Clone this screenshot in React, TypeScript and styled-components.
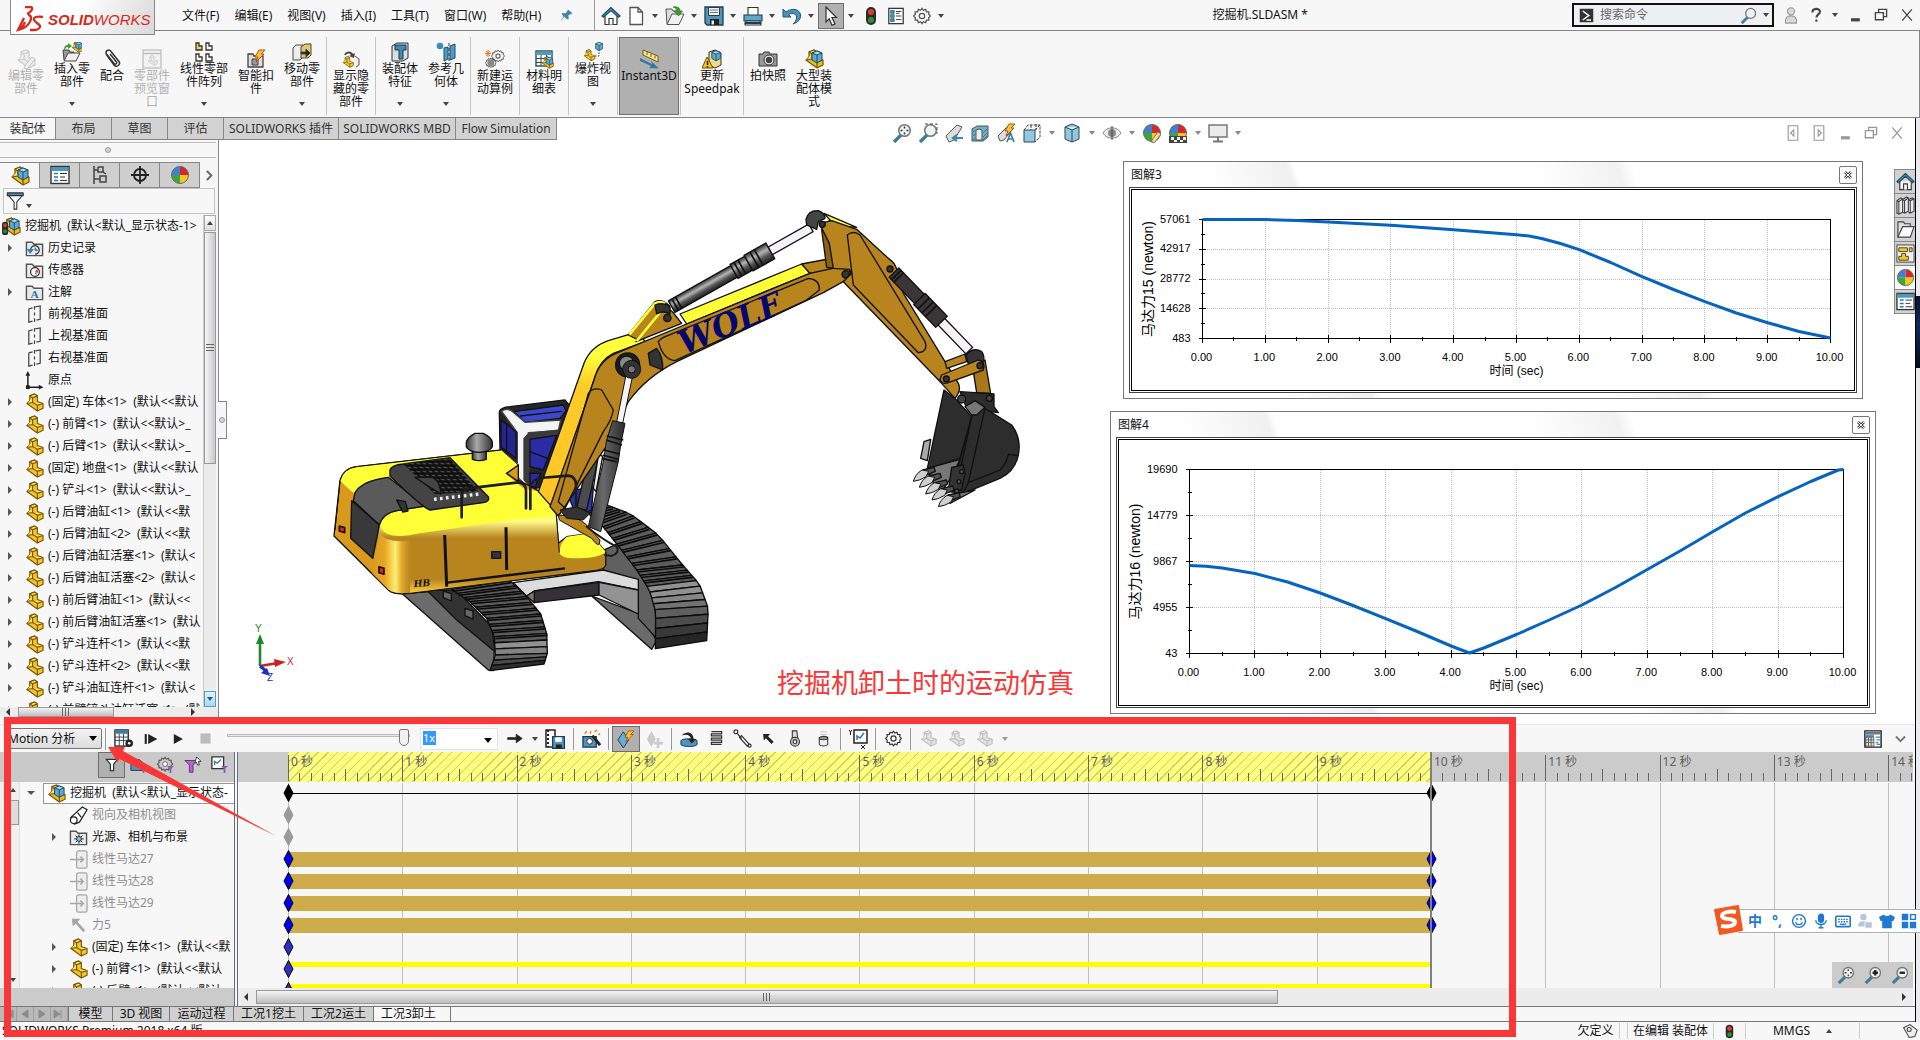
import React from "react";
import styled, { createGlobalStyle } from "styled-components";

const sans = `"Noto Sans", "Noto Sans CJK SC", sans-serif`;
const arial = `"Liberation Sans", "Noto Sans CJK SC", sans-serif`;

const Global = createGlobalStyle`
  *, *::before, *::after { box-sizing: border-box; }
  html, body { margin: 0; padding: 0; }
  body { background: #f7f7f7; color: #111; font: 12px/16px ${sans}; }
  button, input, select { font: inherit; color: inherit; margin: 0; padding: 0; border: 0; background: none; border-radius: 0; }
  svg { display: block; flex: none; }
  ul { list-style: none; margin: 0; padding: 0; }
`;

/* ------------------------------------------------------------------ */
/* Icons, all on a 20 x 20 grid                                        */
/* ------------------------------------------------------------------ */

const block = (fill: string, line: string, light: string) => (
  <g stroke={line} strokeWidth="1.2" strokeLinejoin="round">
    <path d="M5 3l5-2 3 2v6l6 2v5l-6 3L2 11l3-3z" fill={fill} />
    <path d="M5 3l5-2 3 2-5 2zM8 5v5l-6 1M8 10l5 3 6-2M13 13v6" fill={light} />
  </g>
);

const cube = (
  <g stroke="#1d4d66" strokeWidth="1" strokeLinejoin="round">
    <path d="M8 4l5-2 5 2v7l-5 3-5-3z" fill="#5fa9cc" />
    <path d="M8 4l5 2 5-2-5-2z" fill="#a9dcf2" />
    <path d="M13 6v8" />
  </g>
);

const magnifier = (
  <g>
    <path d="M9 12l-7 7" stroke="#3f7c9c" strokeWidth="3.4" />
    <circle cx="12.5" cy="7.5" r="5.8" fill="#eef3f5" stroke="#777" strokeWidth="1.5" />
  </g>
);

const folder = <path d="M1.500 17.500v-14h6l2 2h9v12z" fill="#e9eaec" stroke="#555" strokeWidth="1.5" />;

const ball = (
  <g>
    <circle cx="10" cy="10" r="8.500" fill="#eee" />
    <path d="M10 10V1.500A8.500 8.500 0 0 1 18.500 10z" fill="#d9262b" />
    <path d="M10 10V1.500A8.500 8.500 0 0 0 1.500 10z" fill="#3f7fd6" />
    <path d="M10 10H1.500A8.500 8.500 0 0 0 10 18.500z" fill="#3fa63a" />
    <path d="M10 10h8.500A8.500 8.500 0 0 1 10 18.500z" fill="#f2c81d" />
    <circle cx="10" cy="10" r="8.500" fill="none" stroke="#666" />
  </g>
);

const clapper = (c: string) => (
  <path d="M10 1.500l1.600 2.200 2.500-1 .8 2.600 2.700.1-.2 2.700 2 1.900-2 1.900.2 2.700-2.700.1-.8 2.600-2.500-1L10 18.500l-1.600-2.200-2.500 1-.8-2.600-2.700-.1.200-2.700-2-1.900 2-1.900-.2-2.700 2.700-.1.800-2.600 2.500 1z" fill="none" stroke={c} strokeWidth="1.4" />
);

const table = (
  <g>
    <rect x="2" y="2" width="16" height="15" fill="#fff" stroke="#2c4a5a" strokeWidth="1.4" />
    <path d="M2 3h16v3H2z" fill="#4d9cc4" />
    <path d="M2 9.500h16M2 13.500h16M7 6v11M12.500 6v11" stroke="#2c4a5a" />
  </g>
);

const bolt = <path d="M13 1h6l-4 4h3l-8 8 2-5H9z" fill="#f9c72d" stroke="#b5521a" />;

const motorPlate = (
  <g fill="#ededed" stroke="#a8a8a8" strokeWidth="1.3">
    <rect x="8" y="1" width="11" height="18" rx="2" />
    <path d="M1 10h14M12 7l3 3-3 3" fill="none" strokeWidth="1.600" />
  </g>
);

const glyphs: Record<string, React.ReactNode> = {
  part: block("#f5c81f", "#77540a", "#ffe36b"),
  partGray: block("#e2e2e2", "#bcbcbc", "#efefef"),
  asm: (<g>{block("#f0bb1c", "#77540a", "#ffdf66")}{cube}</g>),
  asmTop: (
    <g>
      {block("#f0bb1c", "#77540a", "#ffdf66")}{cube}
      <rect x="0" y="5" width="6.500" height="14" rx="3" fill="#2b2b2b" />
      <circle cx="3.200" cy="8.600" r="2.100" fill="#d8372b" /><circle cx="3.200" cy="15" r="2.100" fill="#2c8a32" />
    </g>
  ),
  history: (<g>{folder}<path d="M6 12a4.500 4.500 0 1 1 4.500 4" fill="none" stroke="#333" strokeWidth="1.300" /><path d="M2.500 11h6l-3 4zM10.500 9v3h3" fill="#2f82ad" stroke="#2f82ad" /></g>),
  sensor: (<g>{folder}<circle cx="10.500" cy="11.500" r="4.600" fill="#fff" stroke="#333" strokeWidth="1.300" /><path d="M10.500 11.500l3-4v5z" fill="#d33" /><path d="M10.500 12.500l2 1.500" stroke="#333" /></g>),
  note: (<g>{folder}<text x="10.200" y="16" fontSize="12" fontFamily="Liberation Serif, serif" fontWeight="700" textAnchor="middle" fill="#2677a3">A</text></g>),
  light: (<g>{folder}<circle cx="10.500" cy="11.500" r="2.600" fill="#7dc3e6" stroke="#222" /><path d="M10.500 6.500v2M10.500 14.500v2M5.500 11.500h2M13.500 11.500h2M7 8l1.500 1.500M14 8l-1.500 1.500M7 15l1.500-1.500M14 15l-1.500-1.500" stroke="#222" /></g>),
  plane: <path d="M4 4l4-1M11 2l5-1v14l-4 1M8 17l-4 1V4M10 1v4M10 8v3M10 14v4" fill="none" stroke="#444" strokeWidth="1.300" />,
  origin: (<g fill="#222"><path d="M3 4v13h12" fill="none" stroke="#222" strokeWidth="1.600" /><path d="M3 0l2.500 5h-5zM19.500 17l-5 2.500v-5z" /><rect x="1" y="15" width="4" height="4" /></g>),
  home: (<g stroke="#333" strokeWidth="1.200"><path d="M4 10v8.500h12V10" fill="#fff" /><path d="M8 18.500v-6h4v6" fill="#fff" /><path d="M10 1.500L1 10l1.500 1.200L10 4.500l7.500 6.700L19 10z" fill="#4b97bd" stroke="#1d4d66" /></g>),
  doc: <path d="M4 1.500h8l4.500 4.500v12.500H4zM12 1.500V6h4.500" fill="#fff" stroke="#555" strokeWidth="1.300" />,
  open: (<g><path d="M1 3h6l1 2h4v13H2z" fill="#ddd" stroke="#555" /><path d="M2 18.500L7 8h12l-5 10.500z" fill="#f1f1f1" stroke="#555" /><path d="M8 1c5-1 7 1 7 4h2.500L13.500 10 9 5h3c0-2-1-3-4-4z" fill="#3f9a2d" stroke="#24701a" strokeWidth=".6" /></g>),
  save: (<g><path d="M1 1h18v18H3l-2-2z" fill="#5394b8" stroke="#1b3f54" strokeWidth="1.300" /><path d="M4.500 1.500h11v8h-11z" fill="#f4f4f4" stroke="#1b3f54" /><path d="M6 4h8M6 6.500h8" stroke="#777" /><path d="M6 13h9v6H6z" fill="#222" /><path d="M7.500 14.500h2.500v4H7.500z" fill="#eee" /></g>),
  print: (<g stroke="#333" strokeWidth="1.100"><path d="M5 9V1.500h10V9" fill="#fff" /><path d="M1 9h18v6H1z" fill="#5fa7cb" stroke="#1b3f54" /><path d="M3 15l-1 4h16l-1-4z" fill="#eee" /><path d="M1.500 17h17" stroke="#1b3f54" strokeWidth="2" /></g>),
  undo: <path d="M1 3v8h8L6.500 8.500c4-2.500 9-.5 8 4-.4 2-1.500 4-3.500 5.500 5-1.500 8-5 7.500-9C18 3 10 1.500 4 6z" fill="#4d8fb6" stroke="#1f567a" />,
  cursor: <path d="M5 1l10.500 10.500H11l3 6.500-3 1.300-2.800-6.500L5 16z" fill="#f4f4f4" stroke="#333" strokeWidth="1.200" />,
  traffic: (<g><rect x="5" y="1" width="10" height="18" rx="5" fill="#2b2b2b" /><circle cx="10" cy="6" r="3" fill="#e33b2e" /><circle cx="10" cy="14" r="3" fill="#2d9138" /></g>),
  list: (<g><rect x="2" y="1.500" width="16" height="17" fill="#fff" stroke="#333" strokeWidth="1.400" /><path d="M4 4h4v3H4zM4 8.500h4v3H4zM4 13h4v3H4z" fill="#4b97bd" stroke="#1d4d66" strokeWidth=".8" /><path d="M10 5h6M10 7h4M10 10h6M10 14h6" stroke="#333" /></g>),
  listWin: (<g><rect x="1" y="1.500" width="18" height="17" fill="#fff" stroke="#333" strokeWidth="1.400" /><path d="M1.500 2h17v4h-17z" fill="#4b97bd" /><path d="M4 8.500h4M4 12h4M4 15.500h4" stroke="#2d7aa3" strokeWidth="1.600" /><path d="M10 8.500h7M10 12h5M10 15.500h7" stroke="#333" /></g>),
  gear: (<g>{clapper("#555")}<circle cx="10" cy="10" r="3" fill="none" stroke="#555" strokeWidth="1.400" /></g>),
  gearBold: (<g>{clapper("#333")}<circle cx="10" cy="10" r="3" fill="#fff" stroke="#333" strokeWidth="1.400" /></g>),
  pin: <path d="M12 2l6 5-2 1-3.500 1.500.5 5-2.500.5-3.500-3.500L1.500 18 6 11 3.500 8l1-1.500 4.500.5L11 4z" fill="#3f86ad" />,
  edit: (<g opacity=".45">{block("#ddd", "#999", "#eee")}<path d="M9 17l7-9 3 2-7 9-4 1z" fill="#eee" stroke="#888" /></g>),
  insert: (<g><path d="M1 8h6l1 2h4v8H2z" fill="#999" stroke="#444" /><path d="M2 19l4-8h12l-4 8z" fill="#eee" stroke="#444" /><path d="M2 8C2 4 4 3 6 3V1l4 3-4 3V5C4 5 3 6 3 8z" fill="#3f9a2d" /><g transform="translate(9 -1) scale(.6)">{block("#f0bb1c", "#77540a", "#ffdf66")}{cube}</g></g>),
  clip: <path d="M4 5l8 11c2.500 3 7-.5 5-3.500L9 2.500C7-.5 2.500 2 4.500 5l7.500 9.500c1 1.500 3.500 0 2.500-1.500L8 5" fill="none" stroke="#333" strokeWidth="1.500" />,
  preview: (<g opacity=".5"><rect x="1" y="1" width="18" height="18" fill="#eee" stroke="#888" strokeWidth="1.300" /><path d="M1 4.500h18" stroke="#888" strokeWidth="1.500" /><g transform="translate(5 6) scale(.55)">{block("#ddd", "#999", "#eee")}</g></g>),
  pattern: (<g strokeWidth="1.300" stroke="#333"><path d="M2 1h3v3h3v4H2z" fill="#f5d54a" /><path d="M12 1h3v3h3v4h-6zM2 12h3v3h3v4H2zM12 12h3v3h3v4h-6z" fill="#fff" /></g>),
  fastener: (<g><path d="M2 18V5h5l1 2h9v11z" fill="#ddd" stroke="#444" strokeWidth="1.300" /><path d="M6 10h6v6H6z" fill="#999" stroke="#444" />{bolt}</g>),
  move: (<g stroke="#444"><path d="M1 6l3-3h7v12l-3 3H1z" fill="#eee" /><path d="M9 5l4-3h6v11l-3 3h-7z" fill="#e3c870" /><path d="M9 10h5V7l4 4-4 4v-3H9z" fill="#222" /></g>),
  hide: (<g><path d="M3 6c2-5 8-4 9-1l2-1-1 5-5-2 2-1c-1-2-4-2-5 0z" fill="#444" /><g transform="translate(1 7) scale(.6)">{block("#f5c81f", "#77540a", "#ffe36b")}</g><path d="M14 7l4 3v6l-3 2" fill="#eee" stroke="#555" /></g>),
  feature: (<g stroke="#234"><path d="M2 4l5-3h11v15l-5 3H2z" fill="#ddd" /><path d="M5 3h11v5h-3v9H9V8H5z" fill="#3f8db5" /></g>),
  refgeo: (<g><circle cx="4" cy="4" r="3.300" fill="#3f8db5" /><path d="M8 6l4-1v12l-4 2zM14 4l5-2v14l-5 2z" fill="#4b9cc6" stroke="#1d4d66" /><path d="M13 1v18" stroke="#333" strokeDasharray="3 2" /></g>),
  study: (<g><g transform="translate(6 0) scale(.7)">{clapper("#555")}<circle cx="10" cy="10" r="3" fill="none" stroke="#555" strokeWidth="1.500" /></g><g transform="translate(0 8) scale(.58)">{clapper("#444")}<circle cx="10" cy="10" r="6" fill="#888" /></g><path d="M3 1v7M0 4.500h6M1 2l4 5M5 2L1 7" stroke="#e07b2a" /></g>),
  bom: (<g>{table}<g transform="translate(7 7) scale(.65)">{block("#f0bb1c", "#77540a", "#ffdf66")}{cube}</g></g>),
  explode: (<g><g transform="translate(0 7) scale(.62)">{block("#f5c81f", "#77540a", "#ffe36b")}</g><g transform="translate(7 -1) scale(.7)">{cube}</g><path d="M12 14h4V9" fill="none" stroke="#333" strokeDasharray="1.500 1.500" /></g>),
  instant: (<g><path d="M4 1l15 6v6L4 6z" fill="#fbe68c" stroke="#6b5a16" /><path d="M8 3v3M12 5v3M16 6.500v3" stroke="#6b5a16" /><path d="M1 9l12 6-1-3 8 7.500-10-.5 2-2L1 12z" fill="#33799f" /></g>),
  speedpak: (<g><path d="M7 3l6-2 6 3v12l-6 3-6-3z" fill="#eddc8e" stroke="#333" /><g transform="translate(3 0) scale(.85)">{cube}</g><path d="M5 8l6 11H0z" fill="#f7c51c" stroke="#6b4a00" /><path d="M5.500 12v4M5.500 17v1.500" stroke="#222" strokeWidth="1.500" /></g>),
  camera: (<g stroke="#333"><path d="M1 5h4l1-2h5l1 2h7v12H1z" fill="#999" /><circle cx="11" cy="11" r="5" fill="#eee" /><circle cx="11" cy="11" r="2.800" fill="#444" /></g>),
  zoomFit: (<g>{magnifier}<path d="M12.500 3.500v2M12.500 9.500v2M8.500 7.500h2M14.500 7.500h2" stroke="#333" strokeWidth="1.500" /></g>),
  zoomArea: (<g>{magnifier}<path d="M7 1h12v10" fill="none" stroke="#444" strokeDasharray="3 2" /></g>),
  zoomIn: (<g>{magnifier}<path d="M12.500 4.500v6M9.500 7.500h6" stroke="#222" strokeWidth="2.600" /></g>),
  zoomOut: (<g>{magnifier}<path d="M9.500 7.500h6" stroke="#222" strokeWidth="2.600" /></g>),
  search: magnifier,
  scope: (<g><path d="M2 13L13 2l5 2-8 13-5 2z" fill="#ddd" stroke="#555" /><path d="M10 15h9M13 12l-4 3 4 3" stroke="#3d87b0" strokeWidth="2.200" fill="none" /></g>),
  section: (<g stroke="#455"><path d="M2 6l5-3h11v11l-5 4H2z" fill="#6fb0d0" /><path d="M6 7q3-2 6 0v10H6z" fill="#eee" /><path d="M3 9l2-2M3 13l2-2M3 17l2-2M13 10l4-4M13 14l4-4M13 17l4-4" strokeWidth=".7" /></g>),
  dynamic: (<g><path d="M2 13L11 4l5 3-8 10-4 1z" fill="#ddd" stroke="#555" />{bolt}<path d="M11 19l3.500-9 3.500 9M12.500 16h4" fill="none" stroke="#2f7ba5" strokeWidth="1.600" /></g>),
  orient: (<g stroke="#345"><path d="M2 7h11v12H2z" fill="#8fc8e2" /><path d="M2 7l4-5h12v12l-5 5M13 7l5-5M9 2v5M14 1v6" fill="none" strokeDasharray="3 1" /></g>),
  display: (<g stroke="#345"><path d="M3 4l7-3 7 3v12l-7 3-7-3z" fill="#8fc8e2" /><path d="M3 4l7 3 7-3M10 7v12" fill="#d6eef8" /></g>),
  eye: (<g><path d="M1 10c4-7 14-7 18 0-4 7-14 7-18 0z" fill="#eee" stroke="#888" /><circle cx="10" cy="10" r="4" fill="#888" /><path d="M10 3v14" stroke="#444" /></g>),
  ball,
  ballPen: (<g>{ball}<path d="M10 17l6-8 3 2-6 8-3 1z" fill="#f5e08a" stroke="#777" /></g>),
  scene: (<g>{ball}<path d="M1 13h18v7H1z" fill="#444" /><path d="M3 14h3v3H3zM9 14h3v3H9zM15 14h3v3h-3zM6 17h3v2H6zM12 17h3v2h-3z" fill="#eee" /></g>),
  monitor: (<g stroke="#777"><rect x="1" y="2" width="18" height="12" fill="#ececec" strokeWidth="1.500" /><path d="M10 14v4M5 18.500h10" strokeWidth="2" /></g>),
  config: <path d="M4 1v18M4 5h4M4 14h6M8 2h5v5l3 2M8 2v5h5M10 11h6v6h-6z" fill="none" stroke="#444" strokeWidth="1.500" />,
  target: (<g fill="none" stroke="#222" strokeWidth="1.800"><circle cx="10" cy="10" r="6" /><path d="M10 1v18M1 10h18" /></g>),
  funnelBlue: (<g stroke="#333" strokeWidth="1.200"><path d="M2 3l7 8v8h3v-8l7-8z" fill="#fff" /><path d="M1.500 1h17.500v3H1.500z" fill="#3f8db5" /></g>),
  funnel: <path d="M3 3h14l-5 6v8h-4V9z" fill="#fff" stroke="#333" strokeWidth="1.500" />,
  funnelAnim: (<g><path d="M1 4h9l4 3v9H1z" fill="#4d95bb" stroke="#234" /><path d="M11 11h8l-3 3v5h-2v-5z" fill="#9b55b5" /></g>),
  funnelGear: (<g><g transform="scale(.9)">{clapper("#555")}<circle cx="10" cy="10" r="3" fill="#fff" stroke="#555" /></g><path d="M11 11h8l-3 3v5h-2v-5z" fill="#9b55b5" /></g>),
  funnelPurple: (<g><path d="M1 5h13l-4 5v8H6v-8z" fill="#b565cf" stroke="#5d2a70" /><path d="M14 1l5 5h-3l1 4h-2l-1-3-2 1z" fill="#fff" stroke="#333" /></g>),
  funnelPlot: (<g><path d="M1 1v13h13V1z" fill="#fff" stroke="#333" strokeWidth="1.500" /><path d="M4 10V6l3 2 4-4" fill="none" stroke="#2f7ba5" strokeWidth="1.500" /><path d="M11 11h8l-3 3v5h-2v-5z" fill="#9b55b5" /></g>),
  camView: (<g fill="#fff" stroke="#222" strokeWidth="1.300"><path d="M2 12L14 1l5 3-8 13-5 2-4-3z" /><circle cx="5" cy="15" r="3.500" /><path d="M9 7l4 5" /></g>),
  motorGray: motorPlate,
  forceGray: <path d="M3 3h9l-3 3 8 9-2 2-8-9-3 3z" fill="#a5a5a5" />,
  calc: (<g><rect x="1" y="1" width="14" height="17" fill="#fff" stroke="#222" strokeWidth="1.400" /><path d="M1 1h14v4H1z" fill="#3f7c9c" /><path d="M1 8.500h14M1 12h14M5.500 5v13M10 5v13" stroke="#345" /><circle cx="16" cy="15" r="4" fill="#222" /><circle cx="16" cy="15" r="1.400" fill="#fff" /></g>),
  stepPlay: (<g fill="#222"><path d="M1 3h3v14H1z" /><path d="M6 3l13 7-13 7z" /></g>),
  play: <path d="M4 3l13 7-13 7z" fill="#222" />,
  stop: <path d="M4 4h12v12H4z" fill="#bcbcbc" />,
  right: <path d="M2 9h10V5l7 5-7 5v-4H2z" fill="#222" stroke="#222" />,
  film: (<g><path d="M1 1h9v17H1z" fill="#fff" stroke="#222" strokeWidth="1.500" /><path d="M3 1v17" stroke="#222" strokeWidth="2" strokeDasharray="2 2" /><g transform="translate(7 7) scale(.65)"><path d="M1 1h18v18H1z" fill="#5394b8" stroke="#1b3f54" strokeWidth="2" /><path d="M5 2h10v7H5z" fill="#fff" /><path d="M6 13h9v6H6z" fill="#222" /></g></g>),
  wizard: (<g><path d="M1 8h14v11H1z" fill="#4d95bb" stroke="#12384c" strokeWidth="1.300" /><circle cx="8" cy="13" r="3" fill="#fff" stroke="#222" /><path d="M11 7l8 10" stroke="#222" strokeWidth="3" /><path d="M3 5l2-3M9 2v3M13 3l3-2M17 6l2-1" stroke="#e38b2a" strokeWidth="1.600" /></g>),
  keyed: (<g><path d="M7 2l6 9-6 9-6-9z" fill="#64aeda" stroke="#234" />{bolt}</g>),
  addKey: (<g fill="#ccc"><path d="M7 1l5 9-5 9-5-9z" /><path d="M13 9h3v4h4v3h-4v4h-3v-4h-3v-3h3z" /></g>),
  motor: (<g><path d="M1 12c0-3 18-3 18 0v4c0 3-18 3-18 0z" fill="#4d95bb" stroke="#12384c" /><path d="M2 6c6-6 13-3 13 4h3l-5 5-4-5h3c0-4-4-6-10-4z" fill="#222" /></g>),
  spring: <path d="M4 2h12v2.500H4V7h12v2.500H4V12h12v2.500H4V17h12" fill="none" stroke="#333" strokeWidth="1.500" />,
  damper: (<g stroke="#333" strokeWidth="1.300"><path d="M3 3l6 7M7 9l8 9 2-2-8-9z" fill="#eee" /><circle cx="3" cy="3" r="2" fill="#fff" /><circle cx="17.500" cy="17.500" r="1.500" fill="#fff" /></g>),
  force: <path d="M3 3h10l-3 3 8 8-3 3-8-8-3 3z" fill="#222" />,
  contact: (<g stroke="#333" strokeWidth="1.200"><path d="M7 1h5l1 8H7z" fill="#ddd" /><circle cx="10" cy="13" r="5" fill="#bbb" /><circle cx="10" cy="13" r="2" fill="#fff" /></g>),
  gravity: (<g stroke="#333" strokeWidth="1.200"><path d="M6 2h8M6 5h8" stroke="#ccc" /><path d="M5 9h10v8c-2 2.500-8 2.500-10 0z" fill="#eee" /><ellipse cx="10" cy="9.500" rx="5" ry="2" fill="#999" /></g>),
  plot: (<g><path d="M6 1h13v13H6z" fill="#fff" stroke="#222" strokeWidth="1.500" /><path d="M9 11V7l3 2 4-5" fill="none" stroke="#2f7ba5" strokeWidth="1.500" /><path d="M1 1l1.500 2L4 1M2.500 3v3M13 16l4 4M17 16l-4 4" stroke="#222" fill="none" /></g>),
  tableWin: (<g><path d="M1 1h18v18H1z" fill="#fff" stroke="#222" strokeWidth="1.600" /><path d="M1 2h18v3H1z" fill="#777" /><path d="M2 5h9v3H2z" fill="#3f9fc9" /><path d="M2 8h9v10H2z" fill="#ddd" stroke="#444" strokeWidth=".8" /><path d="M2 11h9M2 14h9M5 8v10M8 8v10" stroke="#444" strokeWidth=".8" /><path d="M13 8h5M14 11h4M13 14h3M14 16h4" stroke="#3f8db5" strokeWidth="1.400" /></g>),
  chevDown: <path d="M3 7l7 7 7-7" fill="none" stroke="#777" strokeWidth="3" />,
  chevRight: <path d="M6 3l7 7-7 7" fill="none" stroke="#666" strokeWidth="3" />,
  user: (<g fill="#d8d8d8" stroke="#999" strokeWidth="1.200"><circle cx="10" cy="6" r="4" /><path d="M4 19c-1-6 2-8 6-8s7 2 6 8z" /></g>),
  help: <path d="M5.500 7c0-6 9.500-6 9.500-1 0 3-4.500 3.500-4.500 7M10.500 15.500v3" fill="none" stroke="#444" strokeWidth="2.600" />,
  min: <path d="M5 14h11v4H5z" fill="#444" />,
  restore: <path d="M7 7V3h10v9h-4M3 7h10v9H3z" fill="none" stroke="#444" strokeWidth="1.700" />,
  close: <path d="M4 3l12 14M16 3L4 17" stroke="#444" strokeWidth="1.600" />,
  paneLeft: <path d="M4 1h12v18H4zM11 6v8l-4-4z" fill="none" stroke="#444" strokeWidth="1.400" />,
  paneRight: <path d="M4 1h12v18H4zM9 6v8l4-4z" fill="none" stroke="#444" strokeWidth="1.400" />,
  prompt: (<g><rect x="1" y="1" width="18" height="18" fill="#333" /><path d="M5 4l8 6-8 6M10 16h6" fill="none" stroke="#fff" strokeWidth="2" /></g>),
  books: <path d="M1 5l4-3 2 1v14l-4 2-2-1zM7 4l4-3 2 1v14l-4 2-2-1M13 4l4-2 2 1v13l-4 2-2-1M1 5l2 1 4-3M3 6v13M7 4l2 1 4-3M9 5v13M13 4l2 1 4-2M15 5v13" fill="#eee" stroke="#444" strokeWidth="1.200" />,
  folderOpen: (<g stroke="#444" strokeWidth="1.200"><path d="M2 18V2h6l1 2h6v4" fill="#ddd" /><path d="M2 18L7 7h12l-4 11z" fill="#fff" /></g>),
  palette: (<g stroke="#443"><rect x="1" y="1" width="18" height="18" fill="#eee" /><path d="M3 4h9v4H3zM14 4h3v4h-3zM6 10h4v3h3v4H3v-4h3z" fill="#f5c81f" /></g>),
  tag: (<g fill="#eee" stroke="#444" strokeWidth="1.300"><path d="M2 6l8-4 9 7-3 8-7 1z" /><circle cx="9" cy="8" r="2.500" /></g>),
  smile: (<g fill="none" stroke="#1f78d1" strokeWidth="1.800"><circle cx="10" cy="10" r="8" /><path d="M5.500 11.500c2 4 7 4 9 0M7.500 6v3M12.500 6v3" /></g>),
  mic: (<g stroke="#1f78d1" strokeWidth="1.800"><rect x="7" y="1.500" width="6" height="10" rx="3" fill="#1f78d1" /><path d="M3.500 9c0 7 13 7 13 0M10 14.500v4M7 18.500h6" fill="none" /></g>),
  keyboard: (<g><rect x="1" y="4" width="18" height="13" rx="1" fill="#fff" stroke="#1f78d1" strokeWidth="2" /><path d="M4 8h12M4 11h12" stroke="#1f78d1" strokeWidth="1.700" strokeDasharray="2 1.300" /><path d="M6 14h8" stroke="#1f78d1" strokeWidth="1.700" /></g>),
  person: (<g fill="#b7c5dc"><circle cx="8" cy="5" r="4" /><path d="M1 17c0-9 14-9 14 0z" /><path d="M10 11h9v8h-9z" stroke="#fff" /></g>),
  shirt: <path d="M6 2c2 2.500 6 2.500 8 0l6 3-2 5h-2v9H4v-9H2L0 5z" fill="#1f78d1" />,
  apps: (<g fill="#1f78d1"><path d="M1 1h8v8H1zM1 11h8v8H1zM11 11h8v8h-8z" /><path d="M12 2h6v6h-6z" fill="#fff" stroke="#1f78d1" strokeWidth="1.800" /></g>),
};

const Icon = ({ name, size = 18 }: { name: string; size?: number }) => (
  <svg width={size} height={size} viewBox="0 0 20 20" aria-hidden="true">{glyphs[name]}</svg>
);

const Caret = styled.span<{ $color?: string }>`
  display: block;
  width: 0;
  height: 0;
  border: solid transparent;
  border-width: 4px 3px 0;
  border-top-color: ${(p) => p.$color || "#444"};
`;

/* ------------------------------------------------------------------ */
/* Frame                                                               */
/* ------------------------------------------------------------------ */

const Page = styled.div`
  display: flex;
  flex-direction: column;
  height: 100vh;
  overflow: hidden;
`;

const TitleBar = styled.header`
  display: flex;
  align-items: center;
  height: 31px;
  border-bottom: 1px solid #868686;
  flex: none;
`;

const Logo = styled.div`
  display: flex;
  align-items: center;
  align-self: flex-start;
  gap: 4px;
  width: 145px;
  height: 35px;
  margin: 0 24px 0 10px;
  padding: 6px 0 0 5px;
  border: 1px solid #888;
  border-top: 0;
  background: linear-gradient(115deg, #fff 45%, #d9d9d9);
  color: #da291c;
  font: italic 15px/20px ${arial};
  position: relative;
  z-index: 3;
  flex: none;
  b { font-weight: 700; }
`;

const Menu = styled.nav`
  display: flex;
  gap: 15px;
  margin: 1px 0 0 3px;
  button { white-space: nowrap; }
`;

const Slot = styled.button<{ $w?: number; $on?: boolean; $dim?: boolean }>`
  display: flex;
  align-items: center;
  justify-content: center;
  flex: none;
  width: ${(p) => p.$w || 26}px;
  height: 26px;
  ${(p) => p.$on && "background: #b0b0b0; border: 1px solid #6f6f6f;"}
  ${(p) => p.$dim && "opacity: 0.55;"}
`;

const Divider = styled.span<{ $h?: number }>`
  flex: none;
  width: 1px;
  height: ${(p) => p.$h || 22}px;
  margin: 0 3px;
  background: #999;
`;

const QuickBar = styled.div`
  display: flex;
  align-items: center;
  margin: 2px 0 0;
`;

const DocTitle = styled.h1`
  flex: 1;
  margin: 0;
  text-align: center;
  font: 12px/16px ${sans};
`;

const Search = styled.label`
  display: flex;
  align-items: center;
  gap: 6px;
  width: 202px;
  height: 24px;
  margin-right: 4px;
  padding: 0 3px 0 5px;
  border: 2px solid #111;
  background: #eef0f4;
  input { flex: 1; min-width: 0; outline: 0; }
  input::placeholder { color: #666; opacity: 1; }
`;

const Ribbon = styled.div`
  display: flex;
  height: 87px;
  padding: 6px 0 2px 3px;
  border: solid #868686;
  border-width: 0 1px 1px 0;
  flex: none;
`;

const RibbonRule = styled.span`
  width: 1px;
  margin: 0 1px;
  background: #c4c4c4;
  flex: none;
`;

const RibbonButton = styled.button<{ $w: number; $high?: boolean; $dim?: boolean; $on?: boolean }>`
  display: flex;
  flex-direction: column;
  align-items: center;
  flex: none;
  width: ${(p) => p.$w}px;
  padding-top: ${(p) => (p.$high ? 5 : 12)}px;
  color: ${(p) => (p.$dim ? "#b2b2b2" : "#111")};
  line-height: 13px;
  white-space: nowrap;
  ${(p) => p.$on && "background: #b0b0b0; box-shadow: inset 0 0 0 1px #6f6f6f;"}
  ${Caret} { margin-top: auto; margin-bottom: 9px; }
`;

const Body = styled.div`
  display: flex;
  flex: 1;
  min-height: 0;
`;

const Workspace = styled.main`
  display: flex;
  flex-direction: column;
  flex: 1;
  min-width: 0;
  border-right: 1px solid #000;
  background: #fff;
`;

const Sliver = styled.div`
  width: 4px;
  padding-top: 178px;
  background: #e9ebee;
  &::before { content: ""; display: block; height: 72px; background: linear-gradient(#0b1030, #0e2a5a 40%, #060a18); }
`;

const TabStrip = styled.div`
  display: flex;
  height: 22px;
  flex: none;
`;

const CommandTab = styled.button<{ $w: number; $on?: boolean }>`
  width: ${(p) => p.$w}px;
  height: 22px;
  flex: none;
  color: #333;
  white-space: nowrap;
  background: ${(p) => (p.$on ? "#f7f7f7" : "#d2d2d2")};
  border: solid #868686;
  border-width: 0 ${(p) => (p.$on ? 0 : 1)}px 1px 0;
  &:nth-child(2) { border-left-width: 1px; }
`;

const Middle = styled.div`
  display: flex;
  flex: 1;
  min-height: 0;
`;

/* ------------------------------------------------------------------ */
/* Feature tree                                                        */
/* ------------------------------------------------------------------ */

const SidePanel = styled.aside`
  display: flex;
  flex-direction: column;
  width: 219px;
  flex: none;
  padding: 2px 0 7px;
  background: #f7f7f7;
  border-right: 1px solid #888;
`;

const Grip = styled.div`
  display: grid;
  place-items: center;
  height: 16px;
  margin: 0 2px 4px 0;
  border: solid #bbb;
  border-width: 1px 0;
  flex: none;
`;

const Dot = styled.span`
  width: 6px;
  height: 6px;
  border-radius: 50%;
  border: 1px solid #999;
  background: #d4d4d4;
`;

const PanelTabs = styled.div`
  display: flex;
  align-items: center;
  height: 26px;
  flex: none;
`;

const PanelTab = styled.button<{ $on?: boolean }>`
  display: grid;
  place-items: center;
  width: 40px;
  height: 26px;
  background: ${(p) => (p.$on ? "#f7f7f7" : "#cfcfcf")};
  border: solid #888;
  border-width: 1px 1px ${(p) => (p.$on ? 0 : 1)}px 0;
`;

const FilterBox = styled.button`
  display: flex;
  align-items: center;
  gap: 2px;
  height: 26px;
  margin: 0 3px 1px;
  padding: 0 2px;
  border: 1px solid #c4c4c4;
  flex: none;
  ${Caret} { margin-top: 10px; }
`;

const TreeArea = styled.div`
  display: flex;
  flex: 1;
  min-height: 0;
  overflow: hidden;
`;

const TreeList = styled.ul`
  flex: 1;
  min-width: 0;
  overflow: hidden;
`;

const TreeRow = styled.li<{ $pad: number; $dim?: boolean }>`
  display: flex;
  align-items: center;
  gap: 4px;
  height: 22px;
  padding-left: ${(p) => p.$pad}px;
  color: ${(p) => (p.$dim ? "#8e8e8e" : "#111")};
  white-space: pre;
  overflow: hidden;
`;

const Twist = styled.span<{ $open?: boolean; $none?: boolean }>`
  flex: none;
  width: 0;
  height: 0;
  margin-right: 9px;
  border: solid transparent;
  ${(p) => (p.$open ? "border-width: 4px 4px 0; border-top-color: #555;" : "border-width: 4px 0 4px 4px; border-left-color: #555;")}
  ${(p) => p.$none && "visibility: hidden;"}
`;

const VScroll = styled.div`
  display: flex;
  flex-direction: column;
  width: 13px;
  margin-right: 2px;
  background: #ececec;
  border-left: 1px solid #ccc;
  flex: none;
`;

const ScrollBtn = styled.button<{ $blue?: boolean }>`
  display: grid;
  place-items: center;
  height: 16px;
  flex: none;
  border: 1px solid ${(p) => (p.$blue ? "#5c9cc4" : "#aaa")};
  background: ${(p) => (p.$blue ? "linear-gradient(#e4f3fb,#a9d7f1)" : "linear-gradient(#fff,#ddd)")};
  &:first-child ${Caret} { transform: rotate(180deg); }
`;

const VThumb = styled.div`
  display: grid;
  place-items: center;
  height: 232px;
  margin: 1px 0 auto;
  border: 1px solid #999;
  background: linear-gradient(90deg, #f6f6f6, #c9c9cd);
  color: #555;
`;

const GripLines = styled.span<{ $v?: boolean }>`
  width: 8px;
  height: 8px;
  background: repeating-linear-gradient(${(p) => (p.$v ? "90deg" : "180deg")}, #666 0 1px, transparent 1px 3px);
`;

const HScroll = styled.div<{ $h: number }>`
  display: flex;
  align-items: center;
  height: ${(p) => p.$h}px;
  background: #ececec;
  flex: none;
`;

const SideArrow = styled.span<{ $right?: boolean }>`
  flex: none;
  width: 0;
  height: 0;
  border: solid transparent;
  ${(p) => (p.$right ? "border-width: 4px 0 4px 4px; border-left-color: #333; margin: 0 7px 0 auto;" : "border-width: 4px 4px 4px 0; border-right-color: #333; margin: 0 8px 0 6px;")}
`;

const HThumb = styled.div<{ $w: string }>`
  display: grid;
  place-items: center;
  width: ${(p) => p.$w};
  height: 100%;
  max-height: 14px;
  border: 1px solid #999;
  background: linear-gradient(#f4f4f4, #bdbdbd);
`;

const ScrollCorner = styled.span`
  flex: none;
  width: 16px;
`;

/* ------------------------------------------------------------------ */
/* Viewport                                                            */
/* ------------------------------------------------------------------ */

const Viewport = styled.section`
  position: relative;
  flex: 1;
  min-width: 0;
  background: #fff;
`;

const HeadsUp = styled.div`
  position: absolute;
  top: -20px;
  left: 50%;
  transform: translateX(-50%);
  display: flex;
  align-items: center;
`;

const DocControls = styled.div`
  position: absolute;
  top: -20px;
  right: 5px;
  display: flex;
  opacity: 0.55;
`;

const Splitter = styled.div`
  position: absolute;
  left: -1px;
  top: 261px;
  display: grid;
  place-items: center;
  width: 9px;
  height: 38px;
  border: 1px solid #888;
  border-left: 0;
  background: #f7f7f7;
`;

const Model = styled.svg`
  position: absolute;
  left: 91px;
  top: 50px;
`;

const Triad = styled.svg`
  position: absolute;
  left: 31px;
  top: 484px;
`;

const Caption = styled.p`
  position: absolute;
  left: 558px;
  top: 525px;
  margin: 0;
  color: #fa3737;
  font: 27px/36px ${sans};
  white-space: nowrap;
`;

const TaskPane = styled.div`
  position: absolute;
  right: 0;
  top: 29px;
  display: flex;
  flex-direction: column;
  width: 21px;
  border: solid #888;
  border-width: 1px 0 0 1px;
`;

const TaskTab = styled.button<{ $on?: boolean }>`
  display: grid;
  place-items: center;
  height: 24px;
  background: ${(p) => (p.$on ? "#fafafa" : "#d2d2d2")};
  border-bottom: 1px solid #888;
`;

const PlotWindow = styled.figure<{ $top: number; $right: number; $width: number }>`
  position: absolute;
  top: ${(p) => p.$top}px;
  right: ${(p) => p.$right}px;
  width: ${(p) => p.$width}px;
  margin: 0;
  padding: 0 5px 5px;
  border: 1px solid #777;
  background: linear-gradient(70deg, #fff 20%, #f0f0f0 30%, #fff 31%, #fff 60%, #f1f1f1 70%, #fff 72%);
`;

const PlotTitle = styled.figcaption`
  display: flex;
  align-items: center;
  justify-content: space-between;
  height: 25px;
  padding-left: 2px;
`;

const PlotClose = styled.button`
  display: grid;
  place-items: center;
  width: 18px;
  height: 18px;
  border: 1px solid #777;
  border-radius: 2px;
  background: #fff;
`;

const PlotFrame = styled.div`
  padding: 1px;
  border: 1px solid #444;
  background: #fff;
  > svg { border: 1px solid #000; box-sizing: content-box; }
`;

type PlotProps = {
  name: string; series: string; top: number; right: number;
  view: [number, number, number, number];
  box: [number, number, number, number];
  ticks: string[]; pts: [number, number][]; labelX: number;
};

const Plot = ({ name, series, top, right, view, box, ticks, pts, labelX }: PlotProps) => {
  const [l, t, r, b] = box;
  const px = (v: number) => l + ((r - l) * v) / 10;
  const line = pts.map(([v, y], i) => `${i === 0 ? "M" : "L"}${px(v)} ${y}`).join("");
  return (
    <PlotWindow $top={top} $right={right} $width={view[2] + 18}>
      <PlotTitle>{name}<PlotClose aria-label="关闭"><svg width="8" height="8" viewBox="0 0 8 8"><path d="M1 1l6 6M7 1L1 7" stroke="#444" strokeWidth="2.600" /><path d="M1 1l6 6M7 1L1 7" stroke="#fff" /></svg></PlotClose></PlotTitle>
      <PlotFrame>
        <svg width={view[2]} height={view[3]} viewBox={view.join(" ")} fontFamily={arial} fontSize="11" shapeRendering="crispEdges">
          <g stroke="#bdbdbd" strokeDasharray="1 1">
            {[1, 2, 3, 4, 5, 6, 7, 8, 9].map((n) => <path key={n} d={`M${Math.floor(px(n)) + 0.5} ${t}V${b}`} />)}
            {[1, 2, 3].map((n) => <path key={n} d={`M${l} ${Math.floor(t + ((b - t) * n) / 4) + 0.5}H${r}`} />)}
          </g>
          <rect x={l} y={t} width={r - l} height={b - t} fill="none" stroke="#000" />
          <g stroke="#000">
            {Array.from({ length: 21 }, (_, i) => <path key={i} d={`M${Math.floor(px(i / 2)) + 0.5} ${b - (i % 2 ? 2 : 4)}v${i % 2 ? 4 : 8}`} />)}
            {Array.from({ length: 9 }, (_, i) => <path key={i} d={`M${l - (i % 2 ? 2 : 4)} ${Math.floor(t + ((b - t) * i) / 8) + 0.5}h${i % 2 ? 4 : 7}`} />)}
          </g>
          <path d={line} fill="none" stroke="#0563c1" strokeWidth="3" strokeLinejoin="round" shapeRendering="auto" />
          {ticks.map((s, i) => <text key={s} x={l - 12} y={t + ((b - t) * i) / 4 + 3} textAnchor="end">{s}</text>)}
          {Array.from({ length: 11 }, (_, i) => <text key={i} x={px(i) - 1} y={b + 22} textAnchor="middle">{i}.00</text>)}
          <text x={(l + r) / 2} y={b + 36} textAnchor="middle" fontSize="12">时间 (sec)</text>
          <text transform={`translate(${labelX} ${(t + b) / 2}) rotate(-90)`} textAnchor="middle" fontSize="14">{series}</text>
        </svg>
      </PlotFrame>
    </PlotWindow>
  );
};

/* Excavator model */

type P = [number, number];
const along = (line: P[], f: number): P => {
  const s = f * (line.length - 1);
  const i = Math.min(Math.floor(s), line.length - 2);
  const k = s - i;
  return [line[i][0] + (line[i + 1][0] - line[i][0]) * k, line[i][1] + (line[i + 1][1] - line[i][1]) * k];
};

const Tread = ({ inner, outer, n }: { inner: P[]; outer: P[]; n: number }) => (
  <g>
    {Array.from({ length: n }, (_, i) => {
      const a = along(inner, i / n), b = along(inner, (i + 1) / n), c = along(outer, (i + 1) / n), d = along(outer, i / n);
      const f = i / n;
      const shade = f < 0.62 ? 92 : f < 0.72 ? 145 : Math.max(34, 145 - (f - 0.7) * 420);
      return (
        <g key={i}>
          <path d={`M${a}L${b}L${c}L${d}Z`} fill={`rgb(${shade},${shade},${shade})`} stroke="#0c0c0c" strokeWidth="4" />
          {f < 0.62 && <path d={`M${a[0] + 3} ${a[1] + 6}L${d[0] + 3} ${d[1] + 6}`} stroke="#0c0c0c" strokeWidth="5" />}
        </g>
      );
    })}
  </g>
);

const Excavator = () => (
  <Model width="730" height="490" viewBox="0 0 2190 1470" role="img" aria-label="挖掘机">
    <defs>
      <linearGradient id="side" x1="0" y1="0" x2="0" y2="1"><stop offset="0" stopColor="#ffff40" /><stop offset=".12" stopColor="#fff98a" /><stop offset=".32" stopColor="#b8841e" /><stop offset=".82" stopColor="#b8841e" /><stop offset="1" stopColor="#ffd23c" /></linearGradient>
      <linearGradient id="rear" x1="0" y1="0" x2="1" y2="0"><stop offset="0" stopColor="#d99a1c" /><stop offset=".35" stopColor="#e8a824" /><stop offset=".62" stopColor="#ffee70" /><stop offset=".8" stopColor="#e0a428" /><stop offset="1" stopColor="#b8841e" /></linearGradient>
      <linearGradient id="boomTop" x1="0" y1="0" x2="0" y2="1"><stop offset="0" stopColor="#ffff3c" /><stop offset=".14" stopColor="#ffff3c" /><stop offset=".3" stopColor="#ffcc28" /><stop offset="1" stopColor="#ffc426" /></linearGradient>
      <linearGradient id="barrel" x1="0" y1="0" x2="0" y2="1"><stop offset="0" stopColor="#333" /><stop offset=".35" stopColor="#b4b4b4" /><stop offset=".65" stopColor="#555" /><stop offset="1" stopColor="#1d1d1d" /></linearGradient>
      <linearGradient id="dark" x1="0" y1="0" x2="1" y2="0"><stop offset="0" stopColor="#333" /><stop offset=".4" stopColor="#6a6a6a" /><stop offset="1" stopColor="#2a2a2a" /></linearGradient>
      <linearGradient id="shade" x1="0" y1="0" x2="1" y2="0"><stop offset="0" stopColor="#383838" /><stop offset=".4" stopColor="#a8a8a8" /><stop offset="1" stopColor="#333" /></linearGradient>
      <pattern id="mesh" width="18" height="12" patternUnits="userSpaceOnUse" patternTransform="skewX(38)"><rect width="18" height="12" fill="#0d0d0d" /><rect x="2" y="2" width="11" height="5" fill="#4c4c4c" /></pattern>
    </defs>

    <g stroke="#111" strokeWidth="4" strokeLinejoin="round">
      {/* far track and undercarriage */}
      <path d="M845 1218L985 1270L1040 1350L1025 1378Z" fill="#6b6b6b" />
      <path d="M860 1090L925 1060L1000 1150L1035 1240L1040 1345L985 1285L985 1200L880 1140Z" fill="#606060" />
      <Tread n={22} inner={[[820, 955], [875, 1005], [925, 1068], [980, 1140], [1018, 1200], [1037, 1265], [1036, 1376]]} outer={[[885, 943], [962, 972], [1045, 1035], [1118, 1125], [1168, 1182], [1195, 1255], [1190, 1352]]} />
      <path d="M610 1178L880 1140L985 1168L985 1200L865 1175L673 1203L650 1218Z" fill="#dcdcdc" />
      <path d="M673 1203L867 1177V1215L673 1238Z" fill="#343236" />
      <path d="M867 1177L985 1200V1272L867 1215Z" fill="#939393" />
      <path d="M650 1218L673 1203V1238Z" fill="#777" />

      {/* near track */}
      <path d="M275 1210L440 1200L555 1330L550 1442L535 1440Z" fill="#6b6b6b" />
      <path d="M350 1200H440L545 1310L555 1385L440 1290Z" fill="#333" />
      <path d="M400 1203l24 8v22l-24-10zM465 1255l24 8v24l-24-10z" fill="#666" />
      <Tread n={15} inner={[[425, 1198], [480, 1235], [530, 1285], [553, 1340], [556, 1395], [540, 1442]]} outer={[[600, 1172], [650, 1220], [692, 1272], [710, 1330], [712, 1390], [702, 1422]]} />

      {/* cab */}
      <path d="M568 665Q572 652 600 650L765 630L790 660L700 890L655 900L570 778Z" fill="#262626" />
      <path d="M612 665L760 645L768 662L750 685L645 697Z" fill="#3d47cc" />
      <path d="M575 664Q590 652 606 664L645 697L752 690L745 722L655 728V895L622 860V728Z" fill="#f4f4f4" stroke="#444" />
      <path d="M655 728L750 718L745 735L662 745L658 890L640 870L640 745Z" fill="#3a3a3a" stroke="none" />
      <path d="M573 690L618 725V805L573 772Z" fill="#24268f" />
      <path d="M660 748L740 736L700 840L660 830ZM660 850L692 850L676 890H660Z" fill="#2a2ca6" />
      <path d="M660 785L712 805M590 705V785M630 678L755 664" stroke="#111" fill="none" />
      <path d="M770 905L850 890L845 960L800 980Z" fill="#2f31b8" />

      {/* rear boom cylinder */}
      <path d="M838 790L866 800L830 960L800 955Z" fill="#4b4b4b" />
      <path d="M866 790L878 800L858 905L850 895Z" fill="#eee" />

      {/* house */}
      <path d="M72 1038L90 872Q100 835 140 830L575 780L625 825V870L690 905L738 965L745 1060L770 1040L840 1030L887 1085V1125Q885 1140 840 1143L300 1210Q250 1215 235 1200Z" fill="#d99a1c" />
      <path d="M90 872Q100 835 140 830L575 780L628 825L585 850L640 895L690 905L738 965C738 985 700 985 640 990L330 1040C240 1055 215 1030 208 1005Q215 965 260 962L350 950L235 862Q160 870 132 910L120 900Z" fill="#ffff38" stroke="none" />
      <path d="M90 872Q100 835 140 830L575 780L625 825M90 872L75 1020" fill="none" strokeWidth="3" />
      <path d="M208 1000C215 1040 260 1045 330 1030L640 985Q720 985 738 965L748 1090Q755 1105 800 1100L887 1090V1125Q885 1140 840 1143L300 1210Q250 1215 235 1200L190 1150Z" fill="url(#side)" stroke="none" />
      <path d="M208 1030Q230 1060 300 1052V1208Q250 1213 235 1200L185 1150Z" fill="url(#rear)" stroke="none" />
      <path d="M748 1088Q750 1060 770 1040L840 1030L887 1085Q870 1105 790 1105Q755 1105 748 1088Z" fill="#ffff38" stroke="none" />
      <path d="M72 1038L235 1200Q250 1215 300 1210L840 1143Q885 1140 887 1125V1085M738 965L748 1088" fill="none" strokeWidth="3" />
      <path d="M135 908Q155 872 235 862L345 948L262 962Q218 970 208 1005L130 932Z" fill="#5a5a5a" />
      <path d="M125 932L208 1005L188 1105L122 1045Z" fill="#393939" />
      <path d="M88 1008l16 5v15l-16-5zM207 1130l15 5v18l-15-5z" fill="#e3261d" stroke="#111" strokeWidth="5" />
      <path d="M404 1035l6 155M588 1012l2 128" strokeWidth="9" fill="none" />
      <path d="M412 1178L765 1135" fill="none" strokeWidth="7" />
      <rect x="545" y="1085" width="27" height="20" fill="#333" />
      <path d="M590 850L625 825V875Z" fill="#d99a1c" />
      <path d="M260 930l26 5 8 28-16 3z" fill="#333" />

      {/* engine grille */}
      <path d="M240 840Q245 825 280 822L420 803L535 920Q540 935 520 938L360 960Q340 955 240 858Z" fill="#444" />
      <path d="M280 822L420 806L505 905L375 912Z" fill="url(#mesh)" stroke="none" />
      <path d="M372 928L510 912" stroke="#eee" strokeWidth="10" strokeDasharray="8 10" />
      <path d="M315 862L368 862Q392 875 392 912L350 885Z" fill="#444" />

      {/* exhaust */}
      <path d="M487 780h42v28q-20 8-42 0z" fill="url(#shade)" />
      <path d="M469 757Q472 742 495 730H520Q545 742 547 757V770Q540 785 508 787Q475 785 469 770Z" fill="url(#shade)" />
    </g>

    {/* boom */}
    <g stroke="#111" strokeWidth="4" strokeLinejoin="round">
      <path d="M685 905L785 625L822 520Q842 470 895 452L985 425L1005 455L910 490Q870 510 855 560L725 950Z" fill="url(#boomTop)" />
      <path d="M1110 372L1475 222L1500 250L1130 402Z" fill="#ffff38" />
      <path d="M1475 222L1555 207L1565 240L1500 250Z" fill="#b8841e" />
      <path d="M720 950L852 570Q868 508 925 487L1130 402L1500 250L1600 228Q1625 235 1623 262L1540 308L1100 515Q1010 560 955 635L895 760L745 978Z" fill="#b8841e" />
      <path d="M745 935L835 610Q850 590 875 600L910 660Q905 690 880 725L765 955Z" fill="none" />
      <path d="M1045 455Q1050 445 1075 436L1495 265Q1530 268 1528 300L1490 330L1095 512Q1060 510 1045 455Z" fill="none" />
      <path d="M955 435L1035 335Q1055 325 1078 347L985 450Z" fill="#b8841e" />
      <path d="M958 434L1035 340Q1050 332 1065 340" fill="none" stroke="#ffff38" strokeWidth="8" />
      <path d="M978 455L1050 365Q1075 345 1095 375L1115 400Z" fill="#b8841e" />
      <path d="M980 453L1050 367Q1060 355 1078 358" fill="none" stroke="#ffff38" strokeWidth="8" />
      <circle cx="1072" cy="384" r="11" fill="#333" />
      <circle cx="953" cy="525" r="36" fill="#1e1e1e" />
      <circle cx="950" cy="520" r="22" fill="#888" />
      <path d="M1015 490L1040 475Q1060 500 1058 540L1020 525Z" fill="#333" />
      <circle cx="1607" cy="253" r="11" fill="#333" />
    </g>
    <text transform="translate(1122 494) rotate(-23)" fontFamily="DejaVu Serif, serif" fontWeight="700" fontStyle="italic" fontSize="96" fill="#06066e">WOLF</text>
    <text transform="translate(312 1192) rotate(-6)" fontFamily="DejaVu Serif, serif" fontWeight="700" fontStyle="italic" fontSize="28" fill="#111">HB</text>

    {/* lift cylinder */}
    <g stroke="#111" strokeWidth="3" strokeLinejoin="round">
      <path d="M947 560L967 562L938 700L920 696Z" fill="#f6f3f8" />
      <circle cx="965" cy="538" r="27" fill="#333" /><circle cx="965" cy="538" r="11" fill="#777" />
      <path d="M908 692L945 700L932 765L925 815L872 1025L835 1010L880 815L890 750Z" fill="url(#dark)" />
      <path d="M890 738L940 750M888 750L936 765M882 780L928 792M878 795L925 808M876 805L922 816" fill="none" strokeWidth="5" />
      <path d="M745 975Q800 975 830 1005L870 1050Q870 1080 845 1045L748 990Z" fill="#b8841e" />
      <path d="M750 960L800 950L840 970L820 990L770 985Z" fill="#333" />
    </g>

    {/* hand rails */}
    <g fill="none" stroke="#1d1d1d" strokeWidth="8" strokeLinecap="round">
      <path d="M455 982V915Q458 898 475 895L625 877Q648 880 648 900V955" />
      <path d="M661 957V890Q668 868 690 864L775 857Q798 860 798 885V945" />
      <path d="M830 1010Q880 1050 920 1070Q930 1090 905 1098L885 1095" strokeWidth="6" />
    </g>

    {/* stick, its cylinders and the bucket */}
    <g transform="translate(990 0)" stroke="#111" strokeWidth="4" strokeLinejoin="round">
      <g transform="translate(95 350) rotate(-29.500)">
        <rect x="0" y="-20" width="215" height="40" fill="url(#barrel)" />
        <rect x="215" y="-24" width="50" height="48" fill="url(#barrel)" />
        <rect x="265" y="-27" width="75" height="54" fill="url(#barrel)" />
        <rect x="340" y="-13" width="140" height="26" fill="#f5f3f7" />
        <path d="M12 -20v40M24 -20v40M228 -24v48M242 -24v48M285 -27v54M300 -27v54" strokeWidth="5" />
      </g>
      <path d="M45 345Q70 335 90 350V372Q70 360 50 372Z" fill="#333" />
      <path d="M545 120L570 90L585 235L560 232Z" fill="#8a6410" />
      <path d="M552 70L650 112L618 110L570 90Z" fill="#ffff38" />
      <path d="M538 100L575 92L650 118L745 205Q775 225 770 255L790 310L955 580Q965 600 945 625L905 580L610 275L635 250L628 238L580 235L568 160Z" fill="#b8841e" />
      <path d="M622 135Q640 120 660 135L855 455Q865 485 835 488L640 285Z" fill="none" />
      <path d="M498 88Q505 60 535 62Q555 70 555 85L535 95L530 118L500 105Z" fill="#444" />
      <circle cx="547" cy="103" r="9" fill="#333" /><circle cx="750" cy="237" r="9" fill="#333" />
      <g transform="translate(762 248) rotate(46)">
        <rect x="0" y="-20" width="120" height="40" fill="#3a3638" />
        <rect x="110" y="-24" width="95" height="48" fill="#3a3638" />
        <rect x="205" y="-14" width="120" height="28" fill="#f5f3f7" />
        <path d="M10 -20v40M20 -20v40M128 -24v48M145 -24v48M160 -24v48" strokeWidth="5" />
      </g>
      <path d="M915 515L975 492L980 515L920 535Z" fill="#b8841e" />
      <path d="M978 495Q1000 470 1025 485Q1035 495 1030 520L985 522Z" fill="#333" />
      <path d="M1000 545L1035 510L1052 610L1010 608Z" fill="#a9781a" />
      <path d="M905 555L1015 510Q1038 515 1030 540L925 578Q905 585 900 568Z" fill="#b8841e" />
      <circle cx="1020" cy="527" r="9" fill="#333" /><circle cx="919" cy="567" r="9" fill="#333" />
      <path d="M960 605L1062 612V650L1075 668L980 655Z" fill="#2d2d2d" />
      <path d="M852 755L872 748L862 812L842 805Z" fill="#aaa" />
      <path d="M912 600L945 625L995 680L960 805L862 835Z" fill="#2d2d2d" />
      <path d="M995 680L1005 635L1035 655L1115 705Q1145 745 1135 795Q1125 845 1080 865L970 910L925 905L960 810Z" fill="#2d2d2d" />
      <path d="M975 650L1005 632L1035 652L1010 675H995Z" fill="#777" />
      <path d="M1035 655L985 878L1080 840Q1100 820 1105 793L1135 797M995 680L950 890M985 878L970 908" fill="none" />
      <circle cx="965" cy="627" r="12" fill="#444" /><circle cx="1048" cy="625" r="9" fill="#444" />
      <path d="M862 835L960 808L935 860L905 905L880 880Z" fill="#777" />
      <path d="M935 832L970 825L975 850L965 900L925 900Z" fill="#333" />
      <path d="M925 915L1005 900L930 940Z" fill="#777" />
      {([[820, 874], [838, 892], [857, 912], [876, 930], [895, 950]] as P[]).map(([x, y]) => (
        <g key={x}>
          <path d={`M${x + 28} ${y - 34}L${x + 62} ${y - 42}L${x + 66} ${y - 30}L${x + 38} ${y - 18}Z`} fill="#555" />
          <path d={`M${x} ${y}Q${x + 6} ${y - 22} ${x + 26} ${y - 34}L${x + 46} ${y - 30}L${x + 38} ${y - 14}Q${x + 20} ${y - 2} ${x} ${y}Z`} fill="#cfcfcf" strokeWidth="3" />
        </g>
      ))}
      <circle cx="965" cy="845" r="6" fill="#555" /><circle cx="957" cy="875" r="6" fill="#555" /><circle cx="950" cy="903" r="6" fill="#555" />
    </g>
  </Model>
);

/* ------------------------------------------------------------------ */
/* Motion study                                                        */
/* ------------------------------------------------------------------ */

const Motion = styled.section`
  position: relative;
  display: flex;
  flex-direction: column;
  flex: none;
  background: #f7f7f7;
`;

const MotionBar = styled.div`
  display: flex;
  align-items: center;
  height: 28px;
  padding: 0 2px 0 5px;
  border-top: 1px solid #e4e6ee;
`;

const StudyType = styled.span`
  display: flex;
  align-items: center;
  position: relative;
  width: 97px;
  height: 21px;
  border: 1px solid #777;
  border-radius: 2px;
  background: linear-gradient(#f4f4f4, #dcdcdc);
  flex: none;
  select { appearance: none; width: 100%; height: 100%; padding-left: 2px; outline: 0; }
  ${Caret} { position: absolute; right: 4px; pointer-events: none; border-width: 5px 4px 0; }
`;

const TimeSlider = styled.input`
  appearance: none;
  width: 183px;
  height: 20px;
  margin: 0 10px 0 8px;
  flex: none;
  &::-webkit-slider-runnable-track { height: 3px; margin-bottom: 6px; border: 1px solid #bbb; background: #e8e8e8; }
  &::-webkit-slider-thumb { appearance: none; width: 10px; height: 17px; margin-top: -6px; border: 1px solid #777; border-radius: 2px 2px 5px 5px; background: #f1f1f1; }
`;

const SpeedBox = styled.span`
  display: flex;
  align-items: flex-start;
  justify-content: space-between;
  width: 78px;
  height: 22px;
  padding: 2px 5px 2px 2px;
  border: 1px solid #dfe3ee;
  background: #fff;
  flex: none;
  input { width: 13px; height: 14px; font-size: 11px; line-height: 14px; background: #3399ff; color: #fff; outline: 0; }
  ${Caret} { border-width: 5px 4px 0; margin-top: 7px; }
`;

const Spacer = styled.span`
  flex: 1;
`;

const MotionBody = styled.div`
  display: flex;
  height: 254px;
`;

const MotionTree = styled.div`
  display: flex;
  flex-direction: column;
  width: 238px;
  flex: none;
  border-right: 4px double #666a80;
`;

const MotionFilters = styled.div`
  display: flex;
  height: 30px;
  padding-left: 98px;
  background: #c9c9c9;
  flex: none;
`;

const MotionRows = styled.div`
  display: flex;
  height: 206px;
  overflow: hidden;
  flex: none;
`;

const MiniScroll = styled.div`
  display: flex;
  flex-direction: column;
  align-items: center;
  width: 20px;
  padding: 6px 0 6px 6px;
  border-right: 1px solid #e2e2e2;
  background: #f0f0f0;
  flex: none;
  > i { width: 12px; height: 25px; margin: 8px 0 auto; border: 1px solid #999; background: #ddd; }
  > ${Caret}:first-child { transform: rotate(180deg); }
`;

const RootBox = styled.span`
  display: flex;
  align-items: center;
  gap: 4px;
  flex: 1;
  height: 21px;
  padding-left: 3px;
  border: 1px solid #999;
  border-right: 0;
  background: #fff;
  overflow: hidden;
`;

const RootTwist = styled(Twist)`
  margin-right: 4px;
`;

const GreyFoot = styled.div`
  flex: 1;
  background: #cbcbcb;
`;

const Timeline = styled.div`
  position: relative;
  display: flex;
  flex-direction: column;
  flex: 1;
  min-width: 0;
  margin-right: 2px;
`;

const Ruler = styled.div`
  display: flex;
  height: 30px;
  padding-left: 50px;
  background: #cbcbcb;
  overflow: hidden;
  flex: none;
`;

const Second = styled.div<{ $live?: boolean }>`
  display: flex;
  align-items: flex-end;
  position: relative;
  flex: none;
  padding-bottom: 1px;
  color: #606060;
  ${(p) => p.$live && "background: repeating-linear-gradient(135deg, #cfcf66 0 1px, #ffff80 1px 7px);"}
  > b { position: absolute; left: 3px; top: 3px; font: 12px/14px ${sans}; white-space: nowrap; }
`;

const Tick = styled.i<{ $h: number }>`
  flex: 1;
  height: ${(p) => p.$h}px;
  border-left: 1px solid #666;
`;

const Lanes = styled.div`
  position: relative;
  height: 206px;
  overflow: hidden;
  flex: none;
`;

const GridLayer = styled.div`
  position: absolute;
  inset: 1px 0 0 50px;
  display: flex;
  overflow: hidden;
`;

const GridCell = styled.i`
  flex: none;
  border-left: 1px solid #c0c0c0;
`;

const Lane = styled.div`
  position: relative;
  height: 22px;
  padding: 4px 0 0 50px;
`;

const Bar = styled.div<{ $kind: string }>`
  height: ${(p) => (p.$kind === "drive" ? 15 : p.$kind === "total" ? 1 : 5)}px;
  margin-top: ${(p) => (p.$kind === "total" ? 7 : 0)}px;
  background: ${(p) => (p.$kind === "drive" ? "#cfac4b" : p.$kind === "total" ? "#000" : "#ffff00")};
`;

const Key = styled.svg`
  position: absolute;
  top: 2px;
  margin-left: -5px;
`;

const Playhead = styled.i`
  position: absolute;
  top: 0;
  bottom: 18px;
  width: 2px;
  background: #808080;
`;

const ZoomBox = styled.div`
  position: absolute;
  right: 0;
  bottom: 18px;
  display: flex;
  background: #cbcbcb;
`;

const StudyTabs = styled.div`
  display: flex;
  height: 16px;
  border: solid #777;
  border-width: 1px 0;
  flex: none;
`;

const StudyTab = styled.button<{ $w: number; $on?: boolean }>`
  width: ${(p) => p.$w}px;
  height: 14px;
  line-height: 14px;
  white-space: nowrap;
  background: ${(p) => (p.$on ? "#f7f7f7" : "#d0d0d0")};
  border-right: 1px solid #777;
  flex: none;
  ${(p) => p.$on && "padding-left: 7px; text-align: left;"}
`;

const NavTabs = styled.div`
  display: flex;
  width: 69px;
  border-right: 1px solid #777;
  background: #b9b9b9;
  button { flex: 1; border: solid #a0a0a0; border-width: 0 1px 0 0; display: grid; place-items: center; }
`;

const RedFrame = styled.div`
  position: absolute;
  inset: -7px 399px -15px 4px;
  border: 7px solid #fa3737;
  pointer-events: none;
  z-index: 5;
`;

const RedArrow = styled.svg`
  position: absolute;
  left: 100px;
  top: 16px;
  pointer-events: none;
  z-index: 5;
`;

const ImeBar = styled.div`
  position: absolute;
  right: -5px;
  bottom: 89px;
  display: flex;
  align-items: center;
  width: 182px;
  height: 24px;
  padding-left: 6px;
  border: solid #aab0b8;
  border-width: 1px 0;
  background: #fff;
  color: #1f78d1;
  z-index: 6;
  button { width: 22px; display: grid; place-items: center; flex: none; font-weight: 700; font-size: 14px; }
`;

const ImeLogo = styled.svg`
  position: absolute;
  left: -24px;
  top: -5px;
`;

const Status = styled.footer`
  display: flex;
  align-items: center;
  height: 18px;
  padding: 0 2px;
  white-space: nowrap;
  flex: none;
`;

const StatusCell = styled.span<{ $w: number }>`
  display: flex;
  align-items: center;
  justify-content: center;
  gap: 16px;
  width: ${(p) => p.$w}px;
  height: 16px;
  border-right: 1px solid #ccc;
  &:last-child { border: 0; }
`;

const UpCaret = styled(Caret)`
  transform: rotate(180deg);
`;

/* ------------------------------------------------------------------ */
/* Data                                                                */
/* ------------------------------------------------------------------ */

const ribbon: (null | { i: string; t: string[]; w?: number; drop?: boolean; dim?: boolean; on?: boolean })[] = [
  { i: "edit", t: ["编辑零", "部件"], dim: true },
  { i: "insert", t: ["插入零", "部件"], drop: true },
  { i: "clip", t: ["配合"], w: 34 },
  { i: "preview", t: ["零部件", "预览窗", "口"], dim: true },
  { i: "pattern", t: ["线性零部", "件阵列"], w: 58, drop: true },
  { i: "fastener", t: ["智能扣", "件"] },
  { i: "move", t: ["移动零", "部件"], drop: true },
  null,
  { i: "hide", t: ["显示隐", "藏的零", "部件"] },
  null,
  { i: "feature", t: ["装配体", "特征"], drop: true },
  { i: "refgeo", t: ["参考几", "何体"], drop: true },
  null,
  { i: "study", t: ["新建运", "动算例"] },
  null,
  { i: "bom", t: ["材料明", "细表"] },
  null,
  { i: "explode", t: ["爆炸视", "图"], drop: true },
  null,
  { i: "instant", t: ["Instant3D"], w: 60, on: true },
  null,
  { i: "speedpak", t: ["更新", "Speedpak"], w: 60 },
  null,
  { i: "camera", t: ["拍快照"] },
  { i: "asm", t: ["大型装", "配体模", "式"] },
];

const fixedRows: [string, string, boolean][] = [
  ["history", "历史记录", true],
  ["sensor", "传感器", false],
  ["note", "注解", true],
  ["plane", "前视基准面", false],
  ["plane", "上视基准面", false],
  ["plane", "右视基准面", false],
  ["origin", "原点", false],
];

const partRows = [
  "(固定) 车体<1>  (默认<<默认",
  "(-) 前臂<1>  (默认<<默认>_",
  "(-) 后臂<1>  (默认<<默认>_",
  "(固定) 地盘<1>  (默认<<默认",
  "(-) 铲斗<1>  (默认<<默认>_",
  "(-) 后臂油缸<1>  (默认<<默",
  "(-) 后臂油缸<2>  (默认<<默",
  "(-) 后臂油缸活塞<1>  (默认<",
  "(-) 后臂油缸活塞<2>  (默认<",
  "(-) 前后臂油缸<1>  (默认<<",
  "(-) 前后臂油缸活塞<1>  (默认",
  "(-) 铲斗连杆<1>  (默认<<默",
  "(-) 铲斗连杆<2>  (默认<<默",
  "(-) 铲斗油缸连杆<1>  (默认<",
  "(-) 前臂铲斗油缸活塞<1>  (默",
];

const PPS = 1143 / 10;

const lanes: { bar?: string; start?: string; end?: string }[] = [
  { bar: "total", start: "#000", end: "#000" },
  { start: "#9a9a9a" },
  { start: "#9a9a9a" },
  { bar: "drive", start: "#0000ff", end: "#0000ff" },
  { bar: "drive", start: "#0000ff", end: "#0000ff" },
  { bar: "drive", start: "#0000ff", end: "#0000ff" },
  { bar: "drive", start: "#0000ff", end: "#0000ff" },
  { start: "#3030c8" },
  { bar: "driven", start: "#3030c8" },
  { bar: "driven", start: "#3030c8" },
];

const Diamond = ({ at, fill }: { at: number; fill: string }) => (
  <Key width="11" height="18" viewBox="0 0 11 18" style={{ left: 50 + at * PPS }}>
    <path d="M5.500 0.500L10 9L5.500 17.500L1 9Z" fill={fill} stroke={fill === "#9a9a9a" ? fill : "#000"} />
  </Key>
);

const motionRows: [string, string, boolean, boolean][] = [
  ["camView", "视向及相机视图", true, false],
  ["light", "光源、相机与布景", false, true],
  ["motorGray", "线性马达27", true, false],
  ["motorGray", "线性马达28", true, false],
  ["motorGray", "线性马达29", true, false],
  ["forceGray", "力5", true, false],
  ["part", "(固定) 车体<1>  (默认<<默", false, true],
  ["part", "(-) 前臂<1>  (默认<<默认", false, true],
  ["part", "(-) 后臂<1>  (默认<<默认", false, true],
];

/* ------------------------------------------------------------------ */

export default function App() {
  return (
    <Page>
      <Global />
      <TitleBar>
        <Logo>
          <svg width="28" height="28" viewBox="0 0 28 28" fill="none" stroke="#da291c" strokeWidth="2.300">
            <path d="M9 1h6c3 1 0 5-4 7M12 9c6 0 3 12-10 15L8 12M2 24c3-1 5-3 7-8" />
            <path d="M27 11c-6-1-10 0-9 3s7 4 6 7-4 3-10 3" />
          </svg>
          <span><b>SOLID</b>WORKS</span>
        </Logo>
        <Menu>
          {["文件(F)", "编辑(E)", "视图(V)", "插入(I)", "工具(T)", "窗口(W)", "帮助(H)"].map((m) => <button key={m}>{m}</button>)}
        </Menu>
        <Slot $w={50} aria-label="固定"><Icon name="pin" size={15} /></Slot>
        <Divider $h={30} />
        <QuickBar>
          <Slot $w={25} aria-label="主页"><Icon name="home" size={20} /></Slot>
          {["doc", "open", "save", "print", "undo"].map((n) => (
            <React.Fragment key={n}>
              <Slot $w={25} aria-label={n}><Icon name={n} size={20} /></Slot>
              <Slot $w={14} aria-label={`${n} 选项`}><Caret /></Slot>
            </React.Fragment>
          ))}
          <Slot $w={26} $on aria-label="选择"><Icon name="cursor" size={20} /></Slot>
          <Slot $w={14} aria-label="选择选项"><Caret /></Slot>
          <Slot $w={25} aria-label="重建模型"><Icon name="traffic" size={20} /></Slot>
          <Slot $w={26} aria-label="文件属性"><Icon name="list" /></Slot>
          <Slot $w={25} aria-label="选项"><Icon name="gear" /></Slot>
          <Slot $w={14} aria-label="更多"><Caret /></Slot>
        </QuickBar>
        <DocTitle>挖掘机.SLDASM *</DocTitle>
        <Search>
          <Icon name="prompt" size={15} />
          <input placeholder="搜索命令" aria-label="搜索命令" />
          <Icon name="search" size={17} />
          <Caret />
        </Search>
        <Slot aria-label="登录"><Icon name="user" /></Slot>
        <Slot $w={24} aria-label="帮助"><Icon name="help" size={16} /></Slot>
        <Slot $w={14} aria-label="帮助选项"><Caret /></Slot>
        <Slot aria-label="最小化"><Icon name="min" size={16} /></Slot>
        <Slot aria-label="还原"><Icon name="restore" size={16} /></Slot>
        <Slot aria-label="关闭"><Icon name="close" size={16} /></Slot>
      </TitleBar>

      <Ribbon>
        {ribbon.map((r, i) => r ? (
          <RibbonButton key={i} $w={r.w || 46} $high={r.drop} $dim={r.dim} $on={r.on}>
            <Icon name={r.i} size={20} />
            <span>{r.t.map((s, k) => <React.Fragment key={k}>{k > 0 && <br />}{s}</React.Fragment>)}</span>
            {r.drop && <Caret />}
          </RibbonButton>
        ) : <RibbonRule key={i} />)}
      </Ribbon>

      <Body>
        <Workspace>
          <TabStrip>
            <CommandTab $w={55} $on>装配体</CommandTab>
            <CommandTab $w={57}>布局</CommandTab>
            <CommandTab $w={56}>草图</CommandTab>
            <CommandTab $w={56}>评估</CommandTab>
            <CommandTab $w={115}>SOLIDWORKS 插件</CommandTab>
            <CommandTab $w={117}>SOLIDWORKS MBD</CommandTab>
            <CommandTab $w={101}>Flow Simulation</CommandTab>
          </TabStrip>

          <Middle>
            <SidePanel>
              <Grip><Dot /></Grip>
              <PanelTabs>
                {["asm", "listWin", "config", "target", "ball"].map((n, i) => (
                  <PanelTab key={n} $on={i === 0} aria-label={n}><Icon name={n} size={20} /></PanelTab>
                ))}
                <Slot $w={18} aria-label="更多选项卡"><Icon name="chevRight" size={13} /></Slot>
              </PanelTabs>
              <FilterBox aria-label="过滤"><Icon name="funnelBlue" /><Caret /></FilterBox>
              <TreeArea>
                <TreeList>
                  <TreeRow $pad={2}><Icon name="asmTop" size={19} />挖掘机  (默认&lt;默认_显示状态-1&gt;</TreeRow>
                  {fixedRows.map(([i, t, x]) => (
                    <TreeRow key={t} $pad={8}><Twist $none={!x} /><Icon name={i} size={19} />{t}</TreeRow>
                  ))}
                  {partRows.map((t) => (
                    <TreeRow key={t} $pad={8}><Twist /><Icon name="part" size={19} />{t}</TreeRow>
                  ))}
                </TreeList>
                <VScroll>
                  <ScrollBtn aria-label="向上"><Caret /></ScrollBtn>
                  <VThumb><GripLines /></VThumb>
                  <ScrollBtn $blue aria-label="向下"><Caret $color="#1d5f8a" /></ScrollBtn>
                </VScroll>
              </TreeArea>
              <HScroll $h={10}>
                <SideArrow /><HThumb $w="96px"><GripLines $v /></HThumb><SideArrow $right />
                <ScrollCorner />
              </HScroll>
            </SidePanel>

            <Viewport>
              <HeadsUp>
                {["zoomFit", "zoomArea", "scope", "section", "dynamic", "orient", "|", "display", "|", "eye", "|", "ballPen", "scene", "|", "monitor", "|"].map((n, i) =>
                  n === "|" ? <Slot key={i} $w={14} aria-label="选项"><Caret $color="#888" /></Slot> : <Slot key={i} aria-label={n}><Icon name={n} size={20} /></Slot>
                )}
              </HeadsUp>
              <DocControls>
                {["paneLeft", "paneRight", "min", "restore", "close"].map((n) => <Slot key={n} aria-label={n}><Icon name={n} size={16} /></Slot>)}
              </DocControls>
              <Excavator />
              <Triad width="52" height="58" viewBox="0 0 52 58">
                <path d="M10 42V18" stroke="#1b8a2a" strokeWidth="2.600" /><path d="M10 10l4 10H6z" fill="#1b8a2a" />
                <path d="M10 42l18-3" stroke="#c22" strokeWidth="2.600" /><path d="M36 38l-11 5-1-8z" fill="#c22" />
                <path d="M10 42l6 5" stroke="#1c2fc0" strokeWidth="3" /><path d="M20 52l-9-3 6-5z" fill="#1c2fc0" />
                <text x="5" y="8" fontSize="10" fontFamily={arial} fill="#1b8a2a">Y</text>
                <text x="37" y="41" fontSize="10" fontFamily={arial} fill="#c22">X</text>
                <text x="17" y="57" fontSize="10" fontFamily={arial} fill="#1c2fc0">Z</text>
              </Triad>
              <Caption>挖掘机卸土时的运动仿真</Caption>
              <Splitter><Dot /></Splitter>

              <Plot
                name="图解3" series="马达力15 (newton)" top={21} right={52}
                view={[1132, 190, 722, 200]} box={[1202.5, 219.5, 1830.5, 338.5]} labelX={1153}
                ticks={["57061", "42917", "28772", "14628", "483"]}
                pts={[[0, 219.5], [1, 219.5], [1.5, 220.5], [2, 222], [3, 225.3], [4, 229.7], [5, 234.7], [5.2, 236], [5.4, 238.5], [5.7, 243.5], [6, 249.7], [6.5, 262.5], [7, 276.7], [7.5, 289.5], [8, 301.7], [8.5, 313], [9, 322.7], [9.5, 331.5], [10, 338]]}
              />
              <Plot
                name="图解4" series="马达力16 (newton)" top={271} right={39}
                view={[1119, 440, 748, 265]} box={[1189.5, 469.5, 1843.5, 653.5]} labelX={1140}
                ticks={["19690", "14779", "9867", "4955", "43"]}
                pts={[[0, 565.5], [0.25, 566.3], [0.5, 568], [1, 573.5], [1.5, 582], [2, 593], [2.5, 605.5], [3, 618.7], [3.5, 632], [4, 646], [4.28, 653], [4.5, 648], [5, 634.5], [5.5, 620], [6, 605], [6.5, 588], [7, 569.5], [7.5, 551], [8, 531.7], [8.5, 513], [9, 496.7], [9.5, 481.5], [9.92, 470], [10, 469.5]]}
              />
              <TaskPane>
                {["home", "books", "folderOpen", "palette", "ball", "listWin"].map((n) => (
                  <TaskTab key={n} $on={n === "ball"} aria-label={n}><Icon name={n} size={19} /></TaskTab>
                ))}
              </TaskPane>
            </Viewport>
          </Middle>

          <Motion>
            <MotionBar>
              <StudyType>
                <select aria-label="算例类型"><option>Motion 分析</option></select>
                <Caret $color="#000" />
              </StudyType>
              <Divider />
              <Slot $w={28} aria-label="计算"><Icon name="calc" size={19} /></Slot>
              <Slot $w={28} aria-label="从头播放"><Icon name="stepPlay" size={14} /></Slot>
              <Slot $w={26} aria-label="播放"><Icon name="play" size={14} /></Slot>
              <Slot $w={28} aria-label="停止"><Icon name="stop" size={17} /></Slot>
              <TimeSlider type="range" min={0} max={10} defaultValue={10} aria-label="时间" />
              <SpeedBox><input defaultValue="1x" aria-label="播放速度" /><Caret $color="#000" /></SpeedBox>
              <Slot $w={32} aria-label="播放模式"><Icon name="right" size={17} /></Slot>
              <Slot $w={10} aria-label="播放模式选项"><Caret /></Slot>
              <Slot $w={30} aria-label="保存动画"><Icon name="film" size={20} /></Slot>
              <Divider />
              <Slot $w={28} aria-label="动画向导"><Icon name="wizard" size={19} /></Slot>
              <Divider />
              <Slot $w={28} $on aria-label="自动键码"><Icon name="keyed" /></Slot>
              <Slot $w={28} aria-label="添加键码"><Icon name="addKey" /></Slot>
              <Divider />
              <Slot $w={28} aria-label="马达"><Icon name="motor" /></Slot>
              <Slot aria-label="弹簧"><Icon name="spring" size={17} /></Slot>
              <Slot aria-label="阻尼"><Icon name="damper" size={19} /></Slot>
              <Slot aria-label="力"><Icon name="force" size={14} /></Slot>
              <Slot $w={28} aria-label="接触"><Icon name="contact" /></Slot>
              <Slot $w={28} aria-label="引力"><Icon name="gravity" size={17} /></Slot>
              <Divider />
              <Slot $w={28} aria-label="结果和图解"><Icon name="plot" size={20} /></Slot>
              <Divider />
              <Slot $w={28} aria-label="运动算例属性"><Icon name="gearBold" size={17} /></Slot>
              <Divider />
              <Slot $w={28} aria-label="仿真设置"><Icon name="partGray" size={17} /></Slot>
              <Slot $w={28} aria-label="计算仿真"><Icon name="partGray" size={17} /></Slot>
              <Slot $w={28} aria-label="仿真图解"><Icon name="partGray" size={17} /></Slot>
              <Slot $w={14} aria-label="图解选项"><Caret $color="#999" /></Slot>
              <Spacer />
              <Slot $w={28} aria-label="事件视图"><Icon name="tableWin" /></Slot>
              <Slot aria-label="折叠"><Icon name="chevDown" size={13} /></Slot>
            </MotionBar>

            <MotionBody>
              <MotionTree>
                <MotionFilters>
                  <Slot $w={27} $on aria-label="无过滤"><Icon name="funnel" size={16} /></Slot>
                  {["funnelAnim", "funnelGear", "funnelPurple", "funnelPlot"].map((n) => <Slot key={n} $w={27} aria-label={n}><Icon name={n} /></Slot>)}
                </MotionFilters>
                <MotionRows>
                  <MiniScroll><Caret /><i /><Caret /></MiniScroll>
                  <TreeList>
                    <TreeRow $pad={7}>
                      <RootTwist $open />
                      <RootBox><Icon name="asm" size={19} />挖掘机  (默认&lt;默认_显示状态-</RootBox>
                    </TreeRow>
                    {motionRows.map(([i, t, dim, x]) => (
                      <TreeRow key={t} $pad={32} $dim={dim}><Twist $none={!x} /><Icon name={i} size={19} />{t}</TreeRow>
                    ))}
                  </TreeList>
                </MotionRows>
                <GreyFoot />
              </MotionTree>

              <Timeline>
                <Ruler>
                  {Array.from({ length: 15 }, (_, s) => (
                    <Second key={s} $live={s < 10} style={{ width: PPS }}>
                      <b>{s} 秒</b>
                      {Array.from({ length: 10 }, (_, t) => <Tick key={t} $h={t === 0 ? 26 : t === 5 ? 12 : 8} />)}
                    </Second>
                  ))}
                </Ruler>
                <Lanes>
                  <GridLayer>{Array.from({ length: 15 }, (_, s) => <GridCell key={s} style={{ width: PPS }} />)}</GridLayer>
                  {lanes.map((l, i) => (
                    <Lane key={i}>
                      {l.bar && <Bar $kind={l.bar} style={{ width: 10 * PPS }} />}
                      {l.start && <Diamond at={0} fill={l.start} />}
                      {l.end && <Diamond at={10} fill={l.end} />}
                    </Lane>
                  ))}
                </Lanes>
                <HScroll $h={18}>
                  <SideArrow />
                  <HThumb $w="61%"><GripLines $v /></HThumb>
                  <SideArrow $right />
                </HScroll>
                <Playhead style={{ left: 50 + 10 * PPS - 1 }} />
                <ZoomBox>
                  {["zoomFit", "zoomIn", "zoomOut"].map((n) => <Slot key={n} $w={27} aria-label={n}><Icon name={n} /></Slot>)}
                </ZoomBox>
              </Timeline>
            </MotionBody>

            <StudyTabs>
              <NavTabs>
                {["M4 1v8M11 1L5 5l6 4z", "M9 1L3 5l6 4z", "M3 1l6 4-6 4z", "M8 1v8M1 1l6 4-6 4z"].map((d) => (
                  <button key={d} aria-label="切换标签"><svg width="12" height="10" viewBox="0 0 12 10"><path d={d} fill="#8c8c8c" stroke="#8c8c8c" /></svg></button>
                ))}
              </NavTabs>
              <StudyTab $w={44}>模型</StudyTab>
              <StudyTab $w={57}>3D 视图</StudyTab>
              <StudyTab $w={64}>运动过程</StudyTab>
              <StudyTab $w={70}>工况1挖土</StudyTab>
              <StudyTab $w={70}>工况2运土</StudyTab>
              <StudyTab $w={77} $on>工况3卸土</StudyTab>
            </StudyTabs>

            <RedFrame />
            <RedArrow width="180" height="100" viewBox="100 740 180 100">
              <path d="M108 747L125 747L123 751L276 836L119.500 759L117.500 762Z" fill="#fa3737" />
            </RedArrow>
            <ImeBar>
              <ImeLogo width="30" height="30" viewBox="0 0 30 30">
                <path d="M1 5L24 1l4 24L6 29z" fill="#f4581f" stroke="#f4581f" strokeWidth="2" strokeLinejoin="round" />
                <path d="M22 7c-6-1-14 0-14 4s13 2 13 6-7 5-14 4" fill="none" stroke="#fff" strokeWidth="4" />
              </ImeLogo>
              <button>中</button>
              <button>°,</button>
              {["smile", "mic", "keyboard", "person", "shirt", "apps"].map((n) => <button key={n} aria-label={n}><Icon name={n} size={16} /></button>)}
            </ImeBar>
          </Motion>
        </Workspace>
        <Sliver />
      </Body>

      <Status>
        <span>SOLIDWORKS Premium 2018 x64 版</span>
        <Spacer />
        <StatusCell $w={48}>欠定义</StatusCell>
        <StatusCell $w={8} />
        <StatusCell $w={86}>在编辑 装配体</StatusCell>
        <StatusCell $w={32}><Icon name="traffic" size={15} /></StatusCell>
        <StatusCell $w={114}>MMGS<UpCaret /></StatusCell>
        <StatusCell $w={58}><Spacer /><Icon name="tag" size={16} /></StatusCell>
      </Status>
    </Page>
  );
}
